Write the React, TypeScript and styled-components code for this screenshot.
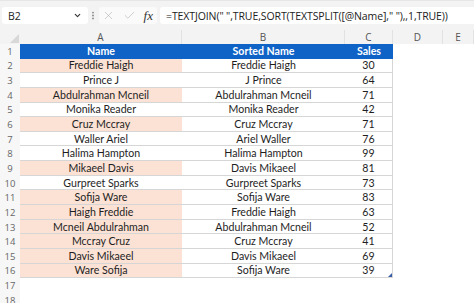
import React from "react";
import styled, { createGlobalStyle } from "styled-components";
import { ChevronDown, X, Check, EllipsisVertical } from "lucide-react";

const GlobalStyle = createGlobalStyle`
  html, body {
    margin: 0;
    padding: 0;
    background: #ffffff;
  }
  body {
    width: 474px;
    height: 303px;
    overflow: hidden;
    font-family: "Lato", "Liberation Sans", sans-serif;
  }
`;

const rows = [
  { name: "Freddie Haigh", sorted: "Freddie Haigh", sales: 30, dup: true },
  { name: "Prince J", sorted: "J Prince", sales: 64, dup: false },
  { name: "Abdulrahman Mcneil", sorted: "Abdulrahman Mcneil", sales: 71, dup: true },
  { name: "Monika Reader", sorted: "Monika Reader", sales: 42, dup: false },
  { name: "Cruz Mccray", sorted: "Cruz Mccray", sales: 71, dup: true },
  { name: "Waller Ariel", sorted: "Ariel Waller", sales: 76, dup: false },
  { name: "Halima Hampton", sorted: "Halima Hampton", sales: 99, dup: false },
  { name: "Mikaeel Davis", sorted: "Davis Mikaeel", sales: 81, dup: true },
  { name: "Gurpreet Sparks", sorted: "Gurpreet Sparks", sales: 73, dup: false },
  { name: "Sofija Ware", sorted: "Sofija Ware", sales: 83, dup: true },
  { name: "Haigh Freddie", sorted: "Freddie Haigh", sales: 63, dup: true },
  { name: "Mcneil Abdulrahman", sorted: "Abdulrahman Mcneil", sales: 52, dup: true },
  { name: "Mccray Cruz", sorted: "Cruz Mccray", sales: 41, dup: true },
  { name: "Davis Mikaeel", sorted: "Davis Mikaeel", sales: 69, dup: true },
  { name: "Ware Sofija", sorted: "Sofija Ware", sales: 39, dup: true },
];

const columns = ["A", "B", "C", "D", "E"];

const App = () => {
  return (
    <>
      <GlobalStyle />
      <Window>
        <FormulaBar>
          <NameBox>
            <span>B2</span>
            <ChevronDown size={9} strokeWidth={3} color="#333" />
          </NameBox>
          <Grip>
            <EllipsisVertical size={11} strokeWidth={2.5} color="#888" />
          </Grip>
          <ActionBox>
            <X size={13} strokeWidth={1} color="#aaa" />
            <Check size={13} strokeWidth={1} color="#aaa" />
            <Fx>fx</Fx>
          </ActionBox>
          <FormulaInput>
            =TEXTJOIN(" ",TRUE,SORT(TEXTSPLIT([@Name]," "),,1,TRUE))
          </FormulaInput>
        </FormulaBar>

        <Sheet>
          <Corner />
          {columns.map((c) => (
            <ColHeader key={c}>{c}</ColHeader>
          ))}

          <RowHeader>1</RowHeader>
          <TableHead>Name</TableHead>
          <TableHead>Sorted Name</TableHead>
          <TableHead>Sales</TableHead>
          <Blank />
          <Blank />

          {rows.map((r, i) => (
            <React.Fragment key={i}>
              <RowHeader>{i + 2}</RowHeader>
              <Cell $fill={r.dup}>{r.name}</Cell>
              <Cell>{r.sorted}</Cell>
              <Cell $edge>
                {r.sales}
                {i === rows.length - 1 && <ResizeHandle />}
              </Cell>
              <Blank />
              <Blank />
            </React.Fragment>
          ))}

          {[17, 18].map((n) => (
            <React.Fragment key={n}>
              <RowHeader>{n}</RowHeader>
              <Blank />
              <Blank />
              <Blank />
              <Blank />
              <Blank />
            </React.Fragment>
          ))}
        </Sheet>
      </Window>
    </>
  );
};

const Window = styled.div`
  width: 474px;
  height: 303px;
  overflow: hidden;
  display: flex;
  flex-direction: column;
  background: #ffffff;
`;

const FormulaBar = styled.div`
  height: 30px;
  flex-shrink: 0;
  box-sizing: border-box;
  padding: 6px 0 6px 2px;
  display: flex;
  align-items: stretch;
  background: #f3f3f3;
  border-top: 1px solid #e6e6e6;
  font-family: "Open Sans", "Noto Sans", sans-serif;
  font-size: 10.5px;
  color: #222;
`;

const NameBox = styled.div`
  width: 86px;
  box-sizing: border-box;
  padding: 0 6px;
  background: #ffffff;
  border-radius: 3px;
  display: flex;
  align-items: center;
  justify-content: space-between;
`;

const Grip = styled.div`
  width: 10px;
  display: flex;
  align-items: center;
  justify-content: center;
`;

const ActionBox = styled.div`
  width: 58px;
  box-sizing: border-box;
  margin-left: 1px;
  padding: 0 3px;
  background: #fafafa;
  border-radius: 3px;
  display: flex;
  align-items: center;
  justify-content: space-between;
`;

const Fx = styled.span`
  font-family: "Liberation Serif", "DejaVu Serif", serif;
  font-style: italic;
  font-size: 13px;
  color: #333;
  margin-right: 1px;
`;

const FormulaInput = styled.div`
  flex: 1;
  margin-left: 3px;
  padding-left: 6px;
  background: #ffffff;
  border-radius: 3px 0 0 3px;
  display: flex;
  align-items: center;
  white-space: pre;
  overflow: hidden;
  letter-spacing: -0.1px;
`;

const Sheet = styled.div`
  display: grid;
  grid-template-columns: 20px 162px 163px 48px 50px 1fr;
  grid-template-rows: 14px repeat(18, 14.65px);
  font-size: 10.6px;
`;

const Corner = styled.div`
  background: #f3f3f3;
  position: relative;
  &::after {
    content: "";
    position: absolute;
    right: 1px;
    bottom: 1px;
    border-left: 9px solid transparent;
    border-bottom: 9px solid #d8d8d8;
  }
`;

const ColHeader = styled.div`
  background: #f3f3f3;
  border-right: 1px solid #e2e2e2;
  display: flex;
  align-items: center;
  justify-content: center;
  font-family: "Open Sans", "Noto Sans", sans-serif;
  font-size: 10px;
  color: #555;
`;

const RowHeader = styled.div`
  background: #f7f7f7;
  display: flex;
  align-items: center;
  justify-content: center;
  font-family: "Open Sans", "Noto Sans", sans-serif;
  font-size: 9.5px;
  color: #666;
`;

const TableHead = styled.div`
  background: #0f63c7;
  color: #ffffff;
  font-weight: 700;
  display: flex;
  align-items: center;
  justify-content: center;
`;

const Cell = styled.div<{ $fill?: boolean; $edge?: boolean }>`
  position: relative;
  background: ${({ $fill }) => ($fill ? "#fbe2d5" : "#ffffff")};
  border-bottom: 1px solid #d6d6d6;
  border-right: ${({ $edge }) => ($edge ? "1px solid #d6d6d6" : "none")};
  box-sizing: border-box;
  display: flex;
  align-items: center;
  justify-content: center;
  color: #1e1e1e;
`;

const ResizeHandle = styled.span`
  position: absolute;
  right: 0;
  bottom: 0;
  border-left: 4px solid transparent;
  border-bottom: 4px solid #3a5fa8;
`;

const Blank = styled.div`
  background: #ffffff;
`;

export default App;
